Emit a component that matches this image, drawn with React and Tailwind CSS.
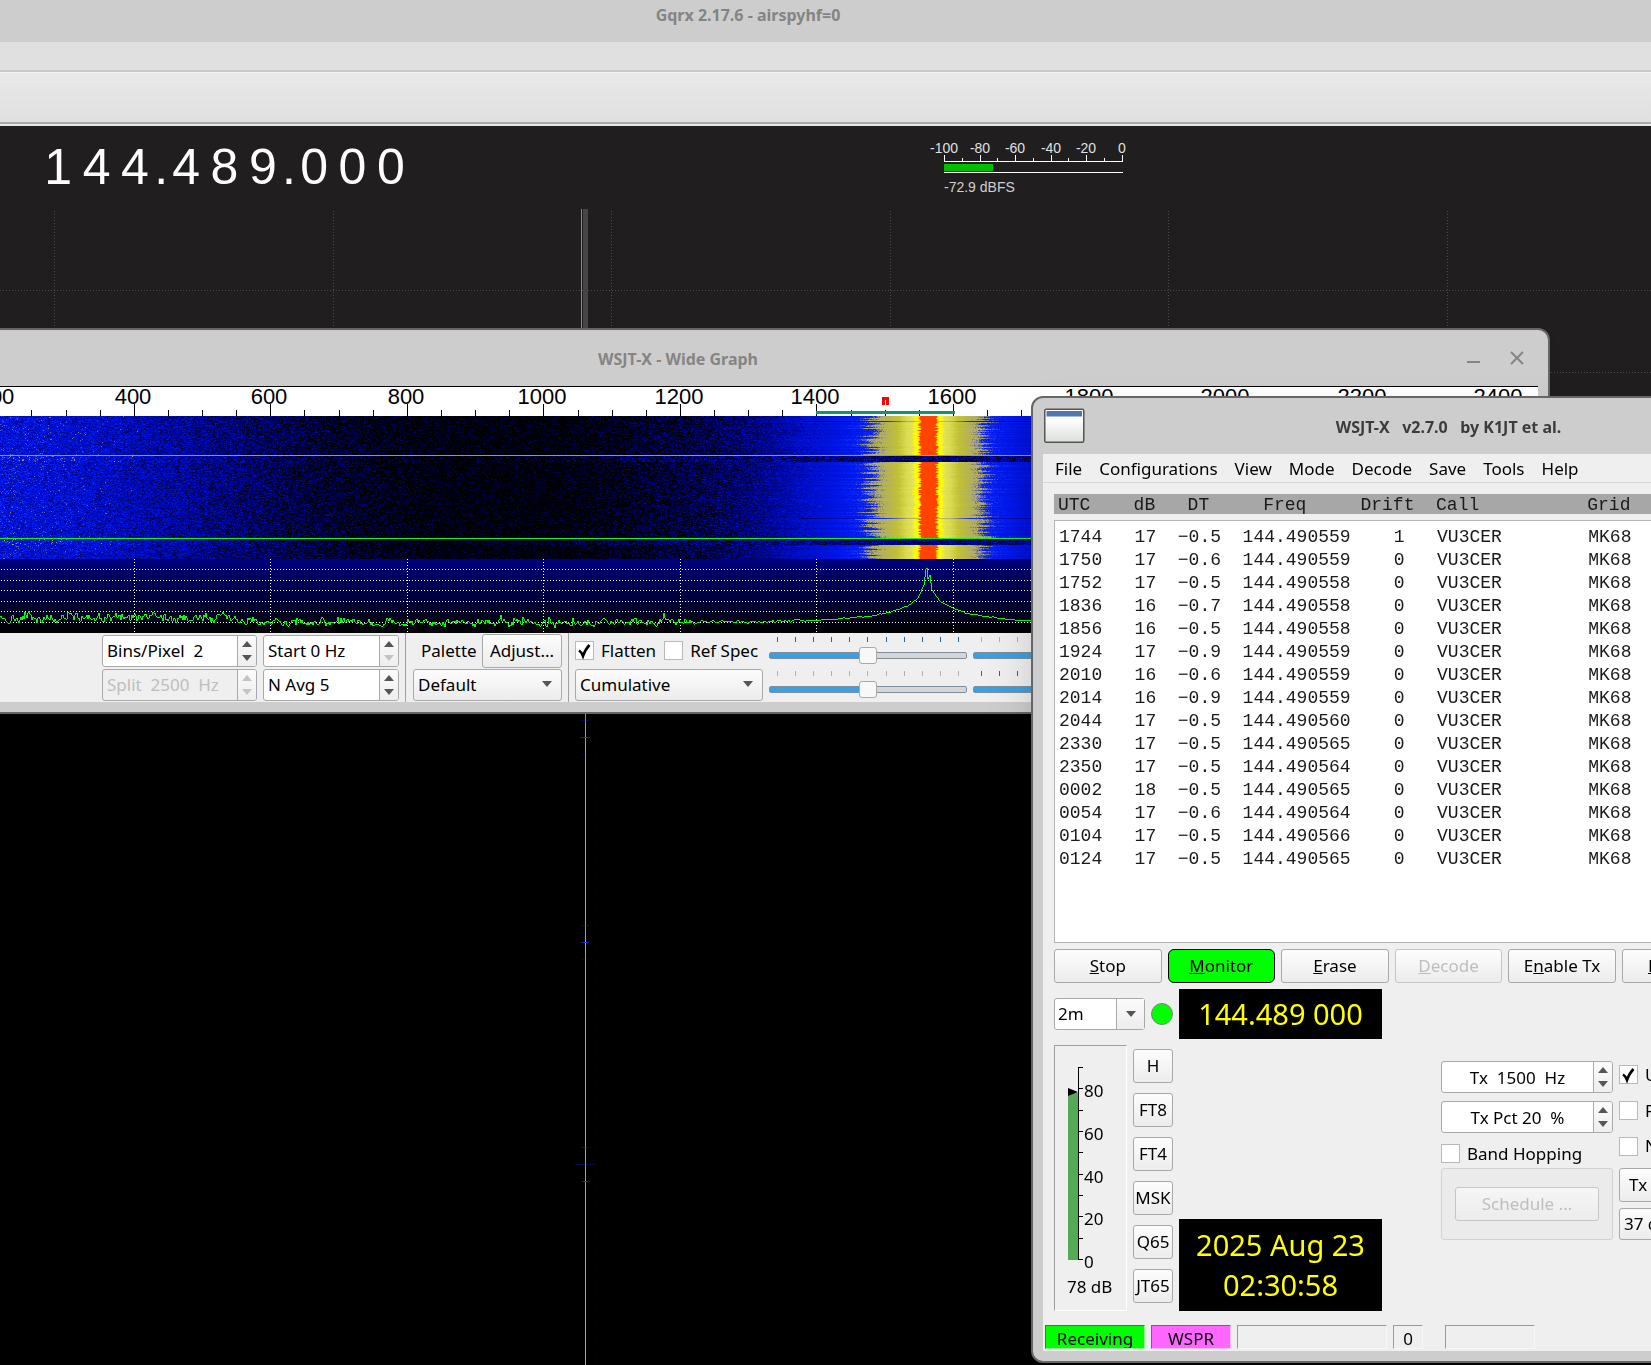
import React, { useEffect, useRef } from 'react';
import { clsx } from 'clsx';

const spots = [
  ['1744', '17', '−0.5', '144.490559', '1', 'VU3CER', 'MK68'],
  ['1750', '17', '−0.6', '144.490559', '0', 'VU3CER', 'MK68'],
  ['1752', '17', '−0.5', '144.490558', '0', 'VU3CER', 'MK68'],
  ['1836', '16', '−0.7', '144.490558', '0', 'VU3CER', 'MK68'],
  ['1856', '16', '−0.5', '144.490558', '0', 'VU3CER', 'MK68'],
  ['1924', '17', '−0.9', '144.490559', '0', 'VU3CER', 'MK68'],
  ['2010', '16', '−0.6', '144.490559', '0', 'VU3CER', 'MK68'],
  ['2014', '16', '−0.9', '144.490559', '0', 'VU3CER', 'MK68'],
  ['2044', '17', '−0.5', '144.490560', '0', 'VU3CER', 'MK68'],
  ['2330', '17', '−0.5', '144.490565', '0', 'VU3CER', 'MK68'],
  ['2350', '17', '−0.5', '144.490564', '0', 'VU3CER', 'MK68'],
  ['0002', '18', '−0.5', '144.490565', '0', 'VU3CER', 'MK68'],
  ['0054', '17', '−0.6', '144.490564', '0', 'VU3CER', 'MK68'],
  ['0104', '17', '−0.5', '144.490566', '0', 'VU3CER', 'MK68'],
  ['0124', '17', '−0.5', '144.490565', '0', 'VU3CER', 'MK68'],
];

const menus = ['File', 'Configurations', 'View', 'Mode', 'Decode', 'Save', 'Tools', 'Help'];
const modes = ['H', 'FT8', 'FT4', 'MSK', 'Q65', 'JT65'];

// wide graph geometry: the plot starts 182px left of the 200 Hz label area
const PLOT_LEFT = -182;
const PLOT_WIDTH = 1720;
const freqToX = (hz) => Math.floor(134.3 + (hz - 400) * 0.68267);

function makeRandom(seed) {
  let s = seed;
  return () => {
    s = (s + 0x6d2b79f5) | 0;
    let t = Math.imul(s ^ (s >>> 15), 1 | s);
    t = (t + Math.imul(t ^ (t >>> 7), 61 | t)) ^ t;
    return ((t ^ (t >>> 14)) >>> 0) / 4294967296;
  };
}

function interpolate(points, x) {
  if (x <= points[0][0]) return points[0][1];
  for (let i = 1; i < points.length; i++) {
    const [x1, y1] = points[i];
    if (x <= x1) {
      const [x0, y0] = points[i - 1];
      return y0 + ((y1 - y0) * (x - x0)) / (x1 - x0);
    }
  }
  return points[points.length - 1][1];
}

const palette = [
  [0, 0, 0, 0],
  [0.15, 0, 2, 90],
  [0.3, 0, 10, 180],
  [0.45, 0, 24, 240],
  [0.52, 20, 45, 240],
  [0.58, 110, 115, 150],
  [0.64, 176, 172, 100],
  [0.74, 194, 194, 52],
  [0.82, 226, 226, 90],
  [0.88, 255, 255, 0],
  [0.94, 255, 170, 0],
  [0.96, 255, 68, 0],
  [1, 255, 68, 0],
];

function levelToRgb(level) {
  return [1, 2, 3].map((c) => interpolate(palette.map((p) => [p[0], p[c]]), level));
}
const lut = Array.from({ length: 256 }, (_, i) => levelToRgb(i / 255));

const noiseFloor = [
  [0, 0.4], [60, 0.38], [110, 0.34], [160, 0.28], [220, 0.2], [280, 0.12],
  [350, 0.04], [430, -0.02], [560, -0.04], [640, 0.04], [720, 0.13], [780, 0.23], [820, 0.33],
  [960, 0.38], [1030, 0.3], [1100, 0.25],
];
const carrier = [
  [0, 1], [8, 0.96], [10, 0.89], [13, 0.87], [16, 0.82], [22, 0.8], [30, 0.74], [38, 0.69],
  [44, 0.65], [52, 0.62], [58, 0.55], [64, 0.49], [80, 0.45], [105, 0.38], [140, 0.28], [190, 0.12], [240, 0],
];

function Waterfall() {
  const ref = useRef(null);

  useEffect(() => {
    const canvas = ref.current;
    const ctx = canvas.getContext('2d');
    const { width, height } = canvas;
    const img = ctx.createImageData(width, height);
    const rand = makeRandom(20250823);

    for (let y = 0; y < height; y++) {
      const gap = (y >= 40 && y < 46) || (y >= 123 && y < 129);
      const dim = y === 5 || y === 102;
      const jitter = (rand() - 0.5) * 3;
      const spreadL = (rand() - 0.5) * 22;
      const spreadR = (rand() - 0.4) * 18;
      let last = 0;
      for (let px = 0; px < width; px++) {
        const x = px + PLOT_LEFT;
        const raw = rand() + rand() - 0.9;
        last = raw * 0.75 + last * 0.25;
        let level = interpolate(noiseFloor, x) + last * 0.26;
        if (x < 140 && rand() < 0.045 * (1 - x / 140)) level = 0.54 + rand() * 0.12;
        if (gap) {
          const mix = Math.max(0, Math.min(1, (x - 450) / 350));
          level = level * (1 - mix) + (0.17 + last * 0.28) * mix;
        } else {
          let d = Math.abs(x - 928 + jitter);
          if (d > 34) d += (x < 928 ? spreadL : spreadR) * Math.min(1, (d - 34) / 24);
          const c = interpolate(carrier, d);
          const rough = d > 46 && d < 74 ? 0.09 : d < 46 ? 0.015 : 0.04;
          const signal = c + (rand() - 0.5) * rough;
          if (c > 0.36) level = signal;
          else level = Math.max(level * 0.9, signal + last * 0.1);
          if (dim && d > 8 && d < 120) level -= 0.16;
        }
        const i = (y * width + px) * 4;
        const rgb = lut[Math.max(0, Math.min(255, Math.round(level * 255)))];
        img.data[i] = rgb[0];
        img.data[i + 1] = rgb[1];
        img.data[i + 2] = rgb[2];
        img.data[i + 3] = 255;
      }
    }
    ctx.putImageData(img, 0, 0);
    // period separators
    ctx.fillStyle = '#00ff00';
    ctx.fillRect(0, 39, width, 1);
    ctx.fillRect(0, 122, width, 1);
  }, []);

  return <canvas ref={ref} width={PLOT_WIDTH} height={143} className="block shrink-0" />;
}

const traceShape = [
  [0, 60], [60, 58], [130, 59], [220, 60], [270, 63], [400, 64], [560, 64], [700, 63], [780, 62],
  [816, 61], [870, 57], [889, 53], [908, 47], [918, 39], [924, 26], [926, 10], [927, 9], [928, 20],
  [930, 16], [932, 31], [940, 42], [953, 49], [968, 54], [990, 58], [1018, 61], [1100, 62],
];

function Spectrum() {
  const rand = makeRandom(1744);
  const points = [];
  let last = 0;
  for (let x = PLOT_LEFT; x < 1538; x++) {
    const amp = x < 260 ? 8 : x < 700 ? 6 : x < 800 ? 3 : 1;
    const spike = x < 700 && rand() < 0.04 ? -4 : 0;
    last = last * 0.5 + (rand() + rand() - 1) * amp * 0.7 + spike;
    const y = interpolate(traceShape, x) + (x > 905 && x < 960 ? 0 : last);
    points.push(`${x},${Math.min(69, Math.round(y))}`);
  }
  return (
    <svg
      className="block shrink-0"
      width={PLOT_WIDTH}
      height="74"
      viewBox={`${PLOT_LEFT} 0 ${PLOT_WIDTH} 74`}
      shapeRendering="crispEdges"
    >
      <defs>
        <linearGradient id="spectrumBg" x1="0" y1="0" x2="0" y2="1">
          <stop offset="0" stopColor="#000080" />
          <stop offset="1" stopColor="#000000" />
        </linearGradient>
      </defs>
      <rect x={PLOT_LEFT} width={PLOT_WIDTH} height="74" fill="url(#spectrumBg)" />
      <g stroke="#ffffff" strokeDasharray="1 2">
        {[10, 21, 31, 42, 52, 63].map((y) => (
          <line key={y} x1={PLOT_LEFT} x2="1538" y1={y + 0.5} y2={y + 0.5} />
        ))}
        {[0, 200, 400, 600, 800, 1000, 1200, 1400, 1600, 1800, 2000, 2200, 2400].map((hz) => (
          <line key={hz} x1={freqToX(hz) + 0.5} x2={freqToX(hz) + 0.5} y1="0" y2="74" />
        ))}
      </g>
      <polyline points={points.join(' ')} fill="none" stroke="#00ff00" />
    </svg>
  );
}

function FrequencyScale() {
  const ticks = [];
  for (let hz = 0; hz <= 2450; hz += 50) ticks.push(hz);
  return (
    <svg
      className="block shrink-0 overflow-visible border-t border-black bg-white"
      width={PLOT_WIDTH}
      height="30"
      viewBox={`${PLOT_LEFT} 0 ${PLOT_WIDTH} 29`}
    >
      <g shapeRendering="crispEdges">
        {ticks.map((hz) => (
          <rect key={hz} x={freqToX(hz)} y={hz % 200 ? 23 : 17} width="1" height={hz % 200 ? 6 : 12} />
        ))}
        <rect x="816" y="24" width="139" height="3" fill="#129668" />
        <path d="M882 10h7v8h-3v-5h-1v5h-3z" fill="#ff0000" />
      </g>
      <g fontFamily="Liberation Sans, Arial, sans-serif" fontSize="22" textAnchor="middle">
        {ticks
          .filter((hz) => hz % 200 === 0)
          .map((hz) => (
            <text key={hz} x={freqToX(hz) - 1} y="17">
              {hz}
            </text>
          ))}
      </g>
    </svg>
  );
}

function Arrow({ up, faded }) {
  return (
    <svg width="10" height="6" viewBox="0 0 10 6" className={faded ? 'text-[#c4c4c4]' : 'text-[#555555]'}>
      <path d={up ? 'M0 6L5 0L10 6z' : 'M0 0L5 6L10 0z'} fill="currentColor" />
    </svg>
  );
}

function SpinBox({ label, value, className, center, disabled, atMinimum }) {
  return (
    <div
      className={clsx(
        'flex h-8 overflow-hidden rounded-[3px] border border-[#a9a9a9]',
        disabled ? 'bg-[#efefef]' : 'bg-white',
        className
      )}
    >
      <input
        aria-label={label}
        defaultValue={value}
        disabled={disabled}
        className={clsx(
          'h-full w-full min-w-0 flex-1 bg-transparent outline-none',
          center ? 'text-center' : 'pl-1',
          disabled ? 'text-[#bebebe]' : 'text-black'
        )}
      />
      <div className="flex w-[19px] shrink-0 flex-col items-center justify-center gap-2 border-l border-[#a9a9a9] bg-linear-to-b from-[#fbfbfb] to-[#eeeeee]">
        <button type="button" aria-label={`${label} up`} disabled={disabled}>
          <Arrow up faded={disabled} />
        </button>
        <button type="button" aria-label={`${label} down`} disabled={disabled || atMinimum}>
          <Arrow faded={disabled || atMinimum} />
        </button>
      </div>
    </div>
  );
}

function Combo({ label, value, className }) {
  return (
    <div className={clsx('relative h-8', className)}>
      <select
        aria-label={label}
        defaultValue={value}
        className="h-full w-full appearance-none rounded-[3px] border border-[#a9a9a9] bg-linear-to-b from-[#fcfcfc] to-[#ececec] pl-1 outline-none"
      >
        <option>{value}</option>
      </select>
      <span className="pointer-events-none absolute top-3 right-2.5">
        <Arrow />
      </span>
    </div>
  );
}

function PushButton({ children, className, disabled }) {
  return (
    <button
      type="button"
      disabled={disabled}
      className={clsx(
        'h-[34px] border whitespace-nowrap',
        disabled ? 'border-[#c6c6c6] text-[#bebebe]' : !className?.includes('border-black') && 'border-[#a9a9a9]',
        className || 'rounded-[3px] bg-linear-to-b from-[#fdfdfd] to-[#ececec]'
      )}
    >
      {children}
    </button>
  );
}

function Check({ label, checked, className }) {
  return (
    <label className={clsx('flex items-center gap-[7px] whitespace-nowrap', className)}>
      <span className="relative h-[19px] w-[19px] shrink-0">
        <input
          type="checkbox"
          defaultChecked={checked}
          className="peer block h-full w-full appearance-none border border-[#b9b9b9] bg-white"
        />
        <svg
          viewBox="0 0 19 19"
          className="pointer-events-none absolute inset-0 hidden h-full w-full peer-checked:block"
        >
          <path d="M4 9.5Q6.5 11 8 15Q10.5 8 14.5 4" fill="none" stroke="#000000" strokeWidth="2.6" />
        </svg>
      </span>
      {label}
    </label>
  );
}

function TickedSlider({ label, active }) {
  return (
    <div className="flex w-[198px] shrink-0 flex-col gap-1">
      <div className="mx-2 flex justify-between">
        {Array(11)
          .fill()
          .map((_, i) => (
            <span key={i} className={clsx('h-[5px] w-px', active ? 'bg-[#1c6ba3]' : 'bg-[#b0b0b0]')} />
          ))}
      </div>
      <input
        type="range"
        aria-label={label}
        defaultValue="50"
        className="block h-[18px] w-full appearance-none bg-transparent [&::-webkit-slider-runnable-track]:h-[7px] [&::-webkit-slider-runnable-track]:rounded-[2px] [&::-webkit-slider-runnable-track]:border [&::-webkit-slider-runnable-track]:border-[#7d8f9c] [&::-webkit-slider-runnable-track]:bg-[linear-gradient(90deg,#3a9fe3_50%,#d6d6d6_50%)] [&::-webkit-slider-thumb]:mt-[-6px] [&::-webkit-slider-thumb]:h-[17px] [&::-webkit-slider-thumb]:w-[18px] [&::-webkit-slider-thumb]:appearance-none [&::-webkit-slider-thumb]:rounded-[3px] [&::-webkit-slider-thumb]:border [&::-webkit-slider-thumb]:border-[#a9a9a9] [&::-webkit-slider-thumb]:bg-[#f8f8f8]"
      />
    </div>
  );
}

function SignalMeter() {
  return (
    <svg width="190" height="56" viewBox="0 0 190 56" className="block overflow-visible">
      <g fontFamily="Liberation Sans, Arial, sans-serif" fontSize="14" fill="#e0e0e0">
        {[-100, -80, -60, -40, -20, 0].map((db, i) => (
          <text key={db} x={Math.round(i * 35.5)} y="13" textAnchor="middle">
            {db}
          </text>
        ))}
        <text x="0" y="52" fill="#d0d0d0">
          -72.9 dBFS
        </text>
      </g>
      <g fill="#ffffff" shapeRendering="crispEdges">
        {Array(11)
          .fill()
          .map((_, i) => (
            <rect
              key={i}
              x={Math.round(i * 17.75)}
              y={i % 2 ? 18 : 15}
              width="1"
              height={i % 2 ? 3 : 6}
            />
          ))}
        <rect x="0" y="21" width="179" height="1" />
        <rect x="0" y="32" width="179" height="1" />
        <rect x="0" y="24" width="49" height="7" fill="#00be00" />
      </g>
    </svg>
  );
}

function GqrxWindow() {
  const columns = [54, 333, 611, 890, 1168, 1447];
  const blips = [
    [720, 0.4, 8], [737, 1, 10], [754, 0.3, 6], [925, 0.5, 8], [942, 1, 8],
    [959, 0.3, 6], [1147, 0.5, 8], [1164, 0.4, 20], [1181, 1, 6],
  ];
  return (
    <div className="flex min-h-screen flex-col">
      <header className="flex h-[42px] items-start justify-center bg-[#cdcdcd] pt-[3px] pr-[155px]">
        <h1 className="text-base leading-6 font-bold text-[#848484]">Gqrx 2.17.6 - airspyhf=0</h1>
      </header>
      <div className="h-[30px] border-b-2 border-[#c8c8c8] bg-[#e0e0e0]" />
      <div className="h-[50px] border-t border-[#f4f4f4] bg-linear-to-b from-[#e9e9e9] to-[#e0e0e0]" />
      <div className="h-1 border-t-2 border-[#a9a9a9] bg-[#e8e8e8]" />
      <main className="flex flex-1 flex-col bg-[#201e1f]">
        <div className="flex h-[83px] items-start pl-[39px]">
          <div className="mt-[13px] flex w-[371px] text-center font-['Liberation_Sans',Arial,sans-serif] text-[50px] leading-[56px] text-white">
            {'144.489.000'.split('').map((c, i) => (
              <span key={i} className={c === '.' ? 'w-0 flex-1' : 'w-0 flex-3'}>
                {c}
              </span>
            ))}
          </div>
          <div className="mt-3.5 ml-[534px]">
            <SignalMeter />
          </div>
        </div>
        <svg className="block h-[300px] w-full" shapeRendering="crispEdges">
          <g stroke="#4c4a4b" strokeDasharray="1 2">
            {columns.map((x) => (
              <line key={x} x1={x + 0.5} x2={x + 0.5} y1="2" y2="300" />
            ))}
            <line x1="0" x2="100%" y1="81.5" y2="81.5" />
            <line x1="0" x2="100%" y1="163.5" y2="163.5" />
          </g>
          <rect x="583" y="0" width="5" height="300" fill="#464445" />
          <rect x="581" y="0" width="1" height="300" fill="#d06a6a" />
        </svg>
        <svg className="block w-full flex-1 bg-black" shapeRendering="crispEdges">
          <line x1="595.5" x2="595.5" y1="0" y2="100%" stroke="#000030" strokeDasharray="2 3 4 1 1 4" />
          <rect x="585" y="0" width="1" height="100%" fill="#7db0a6" />
          {blips.map(([y, strength, w]) => (
            <g key={y} fill="#2030ff" opacity={strength}>
              <rect x={585 - w / 2} y={y - 509} width={w} height="1" opacity="0.6" />
              <rect x="584" y={y - 509} width="3" height="1" />
            </g>
          ))}
        </svg>
      </main>
    </div>
  );
}

function WideGraph() {
  return (
    <section className="absolute top-[328px] left-[-194px] flex w-[1744px] flex-col overflow-hidden rounded-t-xl border-2 border-[#666666] bg-[#cdcdcd] px-2.5 pb-2.5 shadow-lg">
      <header className="grid h-14 grid-cols-[1fr_auto_1fr] items-center pt-0.5">
        <h2 className="col-start-2 text-base font-bold text-[#858585]">WSJT-X - Wide Graph</h2>
        <div className="flex items-center justify-end gap-[30px] pr-3.5 pb-0.5 text-[#858585]">
          <button type="button" aria-label="Minimize">
            <svg width="13" height="14" viewBox="0 0 13 14">
              <rect y="10" width="13" height="2" fill="currentColor" />
            </svg>
          </button>
          <button type="button" aria-label="Close">
            <svg width="14" height="14" viewBox="0 0 14 14">
              <path d="M1 1L13 13M13 1L1 13" stroke="currentColor" strokeWidth="2" />
            </svg>
          </button>
        </div>
      </header>
      <FrequencyScale />
      <Waterfall />
      <Spectrum />
      <div className="flex h-[69px] items-center bg-[#efefef] pl-[284px]">
        <div className="flex shrink-0 gap-1.5">
          <div className="flex w-[155px] flex-col gap-0.5">
            <SpinBox label="Bins per pixel" value="Bins/Pixel  2" />
            <SpinBox label="Split" value="Split  2500  Hz" disabled />
          </div>
          <div className="flex w-[136px] flex-col gap-0.5">
            <SpinBox label="Start" value="Start 0 Hz" atMinimum />
            <SpinBox label="Averages" value="N Avg 5" />
          </div>
        </div>
        <div className="ml-1.5 flex h-full w-[157px] shrink-0 flex-col justify-center gap-px border-l border-[#a0a0a0] pl-[7px]">
          <div className="flex items-center justify-between">
            <span className="pl-2">Palette</span>
            <PushButton className="w-20 rounded-[3px] bg-linear-to-b from-[#fdfdfd] to-[#ececec]">Adjust...</PushButton>
          </div>
          <Combo label="Palette" value="Default" />
        </div>
        <div className="ml-1.5 flex h-full shrink-0 flex-col justify-center gap-0.5 border-l border-[#a0a0a0] pl-1.5">
          <div className="flex h-8 items-center gap-2">
            <Check label="Flatten" checked />
            <Check label="Ref Spec" />
          </div>
          <Combo label="Plot type" value="Cumulative" className="w-[188px]" />
        </div>
        <div className="ml-1.5 grid shrink-0 grid-cols-2 gap-x-1.5 gap-y-[7px]">
          <TickedSlider label="Waterfall gain" active />
          <TickedSlider label="Spectrum gain" />
          <TickedSlider label="Waterfall zero" />
          <TickedSlider label="Spectrum zero" active />
        </div>
      </div>
    </section>
  );
}

function AudioMeter() {
  return (
    <div className="flex h-[266px] w-[73px] flex-col border border-t-[#9f9f9f] border-r-white border-b-white border-l-[#9f9f9f] pt-5">
      <svg width="71" height="208" viewBox="0 0 71 208" className="block">
        <g shapeRendering="crispEdges">
          <rect x="13" y="27" width="10" height="167" fill="#55aa55" />
          <rect x="23" y="1" width="1" height="193" />
          {Array(10)
            .fill()
            .map((_, i) => (
              <rect key={i} x="23" y={Math.round(193 - i * 21.33)} width="5" height="1" />
            ))}
        </g>
        <path d="M13 22L23 26L13 30z" />
        <g fontSize="17">
          {[0, 20, 40, 60, 80].map((v) => (
            <text key={v} x="29" y={Math.round(202 - (v / 10) * 21.33)}>
              {v}
            </text>
          ))}
        </g>
      </svg>
      <span className="px-3 pt-px leading-6">78 dB</span>
    </div>
  );
}

function StatusCell({ children, className }) {
  return (
    <div
      className={clsx(
        'h-6 overflow-hidden border border-t-black/35 border-r-white/60 border-b-white/60 border-l-black/35 text-center leading-[26px]',
        className
      )}
    >
      {children}
    </div>
  );
}

function SpotTable() {
  const cols = 'grid grid-cols-[7ch_4ch_6ch_11ch_7ch_14ch_auto] pl-1';
  return (
    <table className="block text-left font-['Liberation_Mono','Courier_New',monospace] text-lg leading-[23px] text-[#1a1a1a]">
      <thead className="block h-5 bg-[#a7a7a7] leading-[22px]">
        <tr className={cols}>
          <th className="font-normal">UTC</th>
          <th className="font-normal">dB</th>
          <th className="pl-[1ch] font-normal">DT</th>
          <th className="pl-[2ch] font-normal">Freq</th>
          <th className="font-normal">Drift</th>
          <th className="font-normal">Call</th>
          <th className="font-normal">Grid</th>
        </tr>
      </thead>
      <tbody className="mt-1.5 block h-[423px] border border-[#b4b4b4] bg-white pt-[5px]">
        {spots.map((row) => (
          <tr key={row[0]} className={cols}>
            {row.map((cell, i) => (
              <td key={i} className={i === 4 ? 'pl-[3ch]' : ''}>
                {cell}
              </td>
            ))}
          </tr>
        ))}
      </tbody>
    </table>
  );
}

function MainWindow() {
  return (
    <section className="absolute top-[396px] left-[1031px] flex w-[835px] flex-col rounded-xl border-2 border-[#666666] bg-[#cdcdcd] px-2.5 pb-2.5 shadow-2xl">
      <header className="grid h-14 grid-cols-[1fr_auto_1fr] items-center">
        <svg width="41" height="36" viewBox="0 0 41 36" className="ml-px">
          <defs>
            <linearGradient id="appIcon" x1="0" y1="0" x2="0" y2="1">
              <stop offset="0.3" stopColor="#ffffff" />
              <stop offset="1" stopColor="#dcdeda" />
            </linearGradient>
          </defs>
          <rect x="0.75" y="1.25" width="39" height="33" rx="1.5" fill="url(#appIcon)" stroke="#555753" strokeWidth="1.5" />
          <rect x="2.5" y="3" width="35.5" height="5.5" fill="#5077b0" />
        </svg>
        <h2 className="pt-0.5 text-base font-bold whitespace-pre text-[#3c3c3c]">
          {'WSJT-X   v2.7.0   by K1JT et al.'}
        </h2>
      </header>
      <div className="bg-[#efefef]">
        <nav className="flex h-[29px] items-center gap-[17px] border-b border-[#d5d5d5] pt-0.5 pl-3">
          {menus.map((m) => (
            <button key={m} type="button">
              {m}
            </button>
          ))}
        </nav>
        <div className="px-[11px] pt-[11px]">
          <SpotTable />
          <div className="mt-1.5 grid grid-cols-7 gap-1.5">
            <PushButton>
              <u>S</u>top
            </PushButton>
            <PushButton className="rounded-md border-black bg-[#00ff00]">
              <u>M</u>onitor
            </PushButton>
            <PushButton>
              <u>E</u>rase
            </PushButton>
            <PushButton disabled>
              <u>D</u>ecode
            </PushButton>
            <PushButton>
              E<u>n</u>able Tx
            </PushButton>
            <PushButton>
              <u>H</u>alt Tx
            </PushButton>
            <PushButton>
              <u>T</u>une
            </PushButton>
          </div>

          <div className="mt-1.5 flex gap-1.5">
            <div className="flex w-[119px] flex-col gap-1.5">
              <div className="flex h-[50px] items-center gap-1.5">
                <div className="relative h-8 w-[91px]">
                  <select
                    aria-label="Band"
                    className="h-full w-full appearance-none rounded-[3px] border border-[#a9a9a9] bg-white pl-[3px] outline-none"
                  >
                    <option>2m</option>
                  </select>
                  <span className="pointer-events-none absolute inset-y-px right-px flex w-7 items-center justify-center border-l border-[#a9a9a9] bg-linear-to-b from-[#fcfcfc] to-[#ececec]">
                    <Arrow />
                  </span>
                </div>
                <span className="h-[22px] w-[22px] rounded-full border border-[#808080] bg-[#00ff00]" />
              </div>
              <div className="flex gap-1.5">
                <AudioMeter />
                <div className="flex w-10 flex-col gap-2.5 pt-1">
                  {modes.map((m) => (
                    <PushButton key={m}>
                      <span className="flex justify-center">{m}</span>
                    </PushButton>
                  ))}
                </div>
              </div>
            </div>

            <div className="flex w-[203px] flex-col justify-between text-center text-[29px] leading-10 text-[#ffff00]">
              <div className="h-[50px] bg-black pt-[5px]">144.489 000</div>
              <div className="h-[92px] bg-black pt-1.5">
                <div>2025 Aug 23</div>
                <div>02:30:58</div>
              </div>
            </div>

            <div className="mt-[72px] ml-[53px] w-[172px]">
              <div className="flex flex-col gap-2">
                <SpinBox label="Tx frequency" value="Tx  1500  Hz" center />
                <SpinBox label="Tx percent" value="Tx Pct 20  %" center />
              </div>
              <Check label="Band Hopping" className="h-[35px] pt-1.5" />
              <div className="flex h-[72px] items-center justify-center rounded-[3px] border border-[#d2d2d2] bg-[#ebebeb]">
                <PushButton disabled className="w-36 rounded-[3px] bg-linear-to-b from-[#f6f6f6] to-[#ececec]">
                  Schedule ...
                </PushButton>
              </div>
            </div>

            <div className="mt-[72px] flex w-[180px] flex-col">
              <div className="flex h-[107px] flex-col">
                <Check label="Upload spots" checked className="h-9 pb-2" />
                <Check label="Prefer type 1 messages" className="h-9 pb-2" />
                <Check label="No own call" className="h-9 pb-2" />
              </div>
              <div className="flex flex-col gap-1.5">
                <PushButton className="w-20 rounded-[3px] bg-linear-to-b from-[#fdfdfd] to-[#ececec]">
                  Tx Next
                </PushButton>
                <Combo label="Tx power" value="37 dBm  5 W" />
              </div>
            </div>
          </div>
        </div>

        <footer className="mt-3.5 flex gap-1.5 pb-0.5 pl-0.5">
          <StatusCell className="w-[100px] bg-[#00ff00]">Receiving</StatusCell>
          <StatusCell className="w-20 bg-[#ff66ff]">WSPR</StatusCell>
          <StatusCell className="w-[150px]" />
          <StatusCell className="w-[30px]">0</StatusCell>
          <StatusCell className="ml-4 w-[90px]" />
        </footer>
      </div>
    </section>
  );
}

function App() {
  return (
    <div className="relative min-h-screen overflow-hidden bg-black font-['Noto_Sans',sans-serif] text-[17px] leading-6 text-black">
      <GqrxWindow />
      <WideGraph />
      <MainWindow />
    </div>
  );
}

export default App;
